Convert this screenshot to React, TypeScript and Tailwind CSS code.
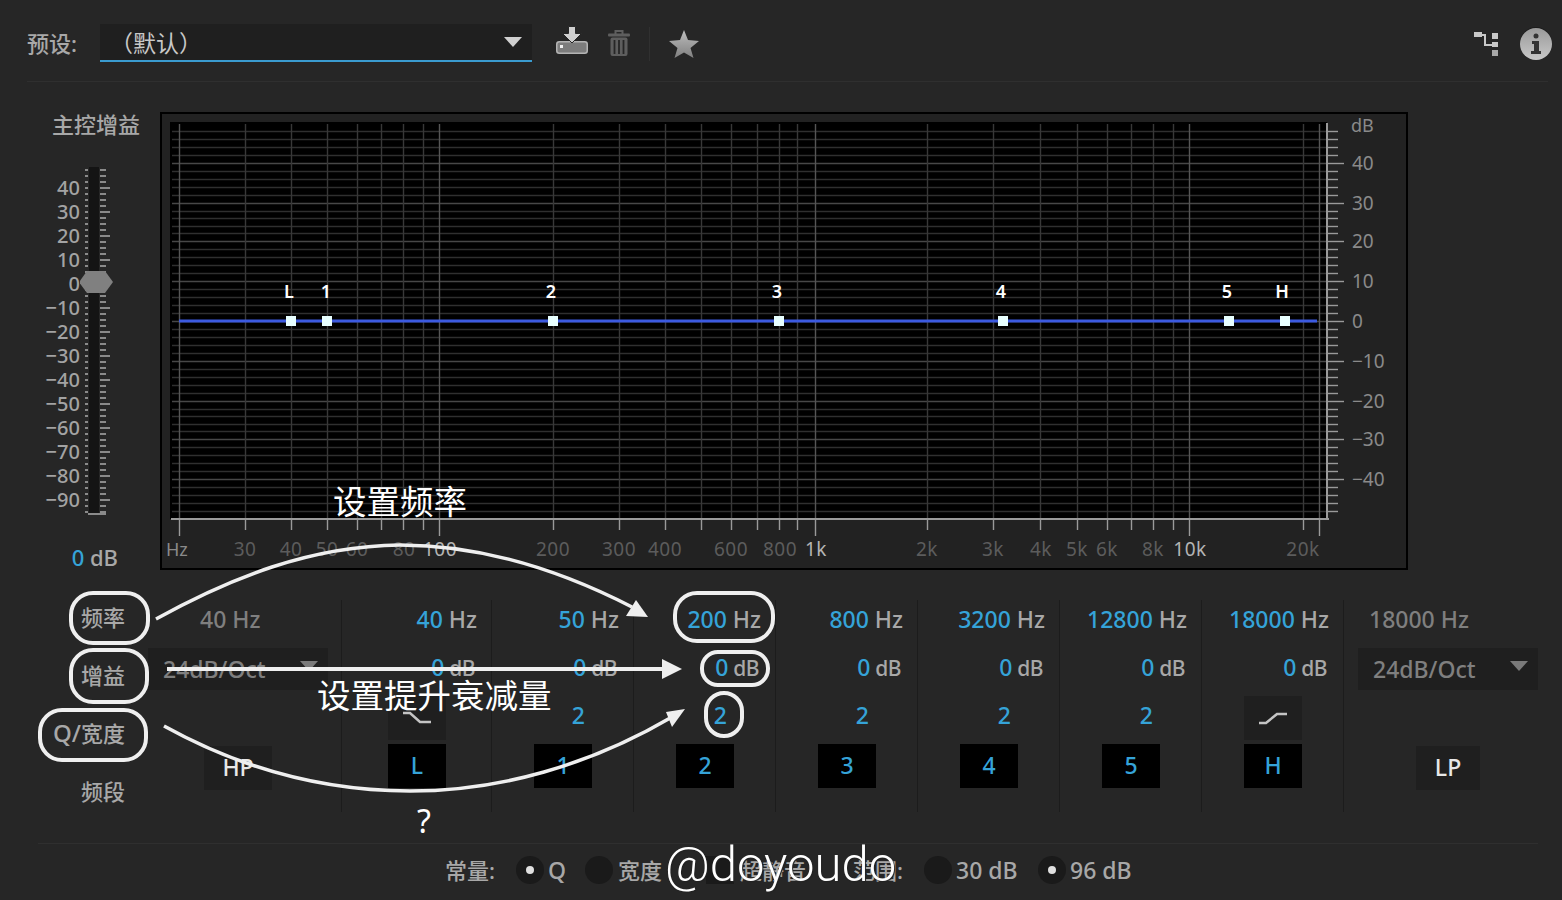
import React from 'react';

const sans = "font-['Noto_Sans','Noto_Sans_CJK_SC',sans-serif]";

const majorY = [123, 163, 203, 241, 281, 321, 361, 401, 439, 479, 519];
const freqTicks = [179, 245, 291, 327, 357, 381, 403, 423, 439, 553, 619, 665, 701, 731, 757, 779, 797, 815, 927, 993, 1040, 1077, 1107, 1131, 1153, 1173, 1189, 1303, 1319];
const freqLabels = [
  { t: '30', x: 245 }, { t: '40', x: 291 }, { t: '50', x: 327 }, { t: '60', x: 357 }, { t: '80', x: 404 },
  { t: '100', x: 440, hi: true }, { t: '200', x: 553 }, { t: '300', x: 619 }, { t: '400', x: 665 }, { t: '600', x: 731 },
  { t: '800', x: 780 }, { t: '1k', x: 816, hi: true }, { t: '2k', x: 927 }, { t: '3k', x: 993 }, { t: '4k', x: 1041 },
  { t: '5k', x: 1077 }, { t: '6k', x: 1107 }, { t: '8k', x: 1153 }, { t: '10k', x: 1190, hi: true }, { t: '20k', x: 1303 },
];
const dbLabels = [
  { t: '40', y: 163 }, { t: '30', y: 203 }, { t: '20', y: 241 }, { t: '10', y: 281 }, { t: '0', y: 321 },
  { t: '−10', y: 361 }, { t: '−20', y: 401 }, { t: '−30', y: 439 }, { t: '−40', y: 479 },
];
const nodes = [
  { t: 'L', x: 291, lx: 289 }, { t: '1', x: 327, lx: 326 }, { t: '2', x: 553, lx: 551 }, { t: '3', x: 779, lx: 777 },
  { t: '4', x: 1003, lx: 1001 }, { t: '5', x: 1229, lx: 1227 }, { t: 'H', x: 1285, lx: 1282 },
];
const masterLabels = ['40', '30', '20', '10', '0', '−10', '−20', '−30', '−40', '−50', '−60', '−70', '−80', '−90'];

const bands = [
  { id: 'L', freq: '40', width: 'w-[150px]', btn: 'mr-[45px]', q: 'low' },
  { id: '1', freq: '50', width: 'w-[142px]', btn: 'mr-[41px]', q: '2' },
  { id: '2', freq: '200', width: 'w-[142px]', btn: 'mr-[41px]', q: '2' },
  { id: '3', freq: '800', width: 'w-[142px]', btn: 'mr-[41px]', q: '2' },
  { id: '4', freq: '3200', width: 'w-[142px]', btn: 'mr-[41px]', q: '2' },
  { id: '5', freq: '12800', width: 'w-[142px]', btn: 'mr-[41px]', q: '2' },
  { id: 'H', freq: '18000', width: 'w-[142px]', btn: 'mr-[41px]', q: 'high' },
];

// every 5th line of the dB grid is brighter, the rest are subdivided between them
function minorY() {
  const out: number[] = [];
  for (let i = 0; i < majorY.length - 1; i++) {
    for (let k = 1; k < 5; k++) {
      const y = majorY[i] + ((majorY[i + 1] - majorY[i]) * k) / 5;
      out.push(Math.round(y));
    }
  }
  return out;
}

function EqGraph() {
  const minors = minorY();
  const inner = majorY.slice(1, -1);
  return (
    <svg width="1244" height="454" viewBox="162 114 1244 454" className="block">
      <rect x="170" y="122" width="1157" height="397" fill="#000" />
      {minors.map((y) => (
        <line key={y} x1="172" x2="1327" y1={y + 0.5} y2={y + 0.5} stroke="#2f2f2f" strokeWidth="1.4" />
      ))}
      {inner.map((y) => (
        <line key={y} x1="172" x2="1327" y1={y + 0.5} y2={y + 0.5} stroke="#474747" strokeWidth="1.4" />
      ))}
      {freqTicks.map((x) => {
        const long = x === 179 || x === 439 || x === 815 || x === 1189 || x === 1319;
        const end = x === 1319 || long ? 536 : 530;
        return (
          <g key={x}>
            <line x1={x + 0.5} x2={x + 0.5} y1="124" y2="519" stroke={long ? '#555' : '#383838'} strokeWidth="1.4" />
            <line x1={x + 0.5} x2={x + 0.5} y1="519" y2={end} stroke="#9a9a9a" strokeWidth="1.4" />
          </g>
        );
      })}
      <line x1="171" x2="1329" y1="519" y2="519" stroke="#9a9a9a" strokeWidth="2" />
      <line x1="1327" x2="1327" y1="123" y2="520" stroke="#9a9a9a" strokeWidth="2" />
      {minors.map((y) => (
        <line key={y} x1="1327" x2="1338" y1={y + 0.5} y2={y + 0.5} stroke="#9a9a9a" strokeWidth="1.4" />
      ))}
      {inner.map((y) => (
        <line key={y} x1="1327" x2="1344" y1={y + 0.5} y2={y + 0.5} stroke="#9a9a9a" strokeWidth="1.4" />
      ))}
      <line x1="179" x2="1317" y1="321" y2="321" stroke="#3c5ae0" strokeWidth="3" />
      {nodes.map((n) => (
        <g key={n.t}>
          <rect x={n.x - 5} y="316" width="10" height="10" fill="#e8ffff" />
          <text x={n.lx} y="298" textAnchor="middle" fontSize="18" fontWeight="600" fill="#fff">{n.t}</text>
        </g>
      ))}
      <text x="1351" y="132" fontSize="18" fill="#8a8a8a">dB</text>
      {dbLabels.map((d) => (
        <text key={d.t} x="1352" y={d.y + 7} fontSize="19" fill="#8a8a8a">{d.t}</text>
      ))}
      <text x="166" y="556" fontSize="18" fill="#8a8a8a">Hz</text>
      {freqLabels.map((l) => (
        <text key={l.t} x={l.x} y="556" textAnchor="middle" fontSize="19" letterSpacing="0.5" fill={l.hi ? '#b4b4b4' : '#5c5c5c'}>{l.t}</text>
      ))}
    </svg>
  );
}

function MasterFader() {
  const dots: number[] = [];
  for (let y = 171; y < 516; y += 6) dots.push(y);
  return (
    <div className="relative h-[348px] w-[160px]">
      <div className="flex w-[80px] flex-col items-end pt-[9px]">
        {masterLabels.map((l) => (
          <div key={l} className="flex h-[24px] items-center text-[20px] font-medium leading-none text-[#a3a3a3]">{l}</div>
        ))}
      </div>
      <svg width="40" height="348" viewBox="80 168 40 348" className="absolute left-[80px] top-0">
        <rect x="89" y="168" width="10" height="348" fill="#141414" />
        {dots.map((y) => (
          <g key={y}>
            <line x1="85" x2="88" y1={y} y2={y} stroke="#8a8a8a" strokeWidth="2" />
            <line x1="100" x2="106" y1={y} y2={y} stroke="#8a8a8a" strokeWidth="2" />
          </g>
        ))}
        {masterLabels.map((l, i) => (
          <line key={l} x1="100" x2="110" y1={189 + i * 24} y2={189 + i * 24} stroke="#8a8a8a" strokeWidth="2" />
        ))}
        <line x1="88" x2="106" y1="515" y2="515" stroke="#8a8a8a" strokeWidth="2" />
        <polygon points="79,283 87,272 105,272 113,283 105,294 87,294" fill="#808080" />
      </svg>
    </div>
  );
}

function HzValue({ n }: { n: string }) {
  return (
    <span className="whitespace-nowrap text-[23px] font-medium leading-none">
      <span className="text-[#35a3d8]">{n}</span>
      <span className="text-[#a8a8a8]"> Hz</span>
    </span>
  );
}

function DbValue() {
  return (
    <span className="whitespace-nowrap text-[23px] font-medium leading-none">
      <span className="text-[#35a3d8]">0</span>
      <span className="text-[21px] tracking-tight text-[#a8a8a8]"> dB</span>
    </span>
  );
}

function CurveIcon({ high }: { high?: boolean }) {
  return (
    <svg width="30" height="14" viewBox="0 0 30 14">
      {high ? (
        <path d="M1 12 H8 L19 3 H29" fill="none" stroke="#c4c4c4" strokeWidth="2.5" />
      ) : (
        <path d="M1 2 H8 L18 11 H29" fill="none" stroke="#c4c4c4" strokeWidth="2.5" />
      )}
    </svg>
  );
}

function BandColumn({ band }: { band: (typeof bands)[number] }) {
  return (
    <div className={`${band.width} flex flex-col items-end border-l border-[#1c1c1c]`}>
      <div className="mb-[2px] flex h-[38px] items-center pr-[14px]">
        <HzValue n={band.freq} />
      </div>
      <div className="mb-[2px] flex h-[54px] items-center pr-[16px]">
        <DbValue />
      </div>
      {band.q === '2' ? (
        <div className="flex h-[44px] items-start pr-[48px] pt-[8px] text-[23px] font-medium leading-none text-[#35a3d8]">2</div>
      ) : (
        <div className={`flex h-[44px] w-[58px] items-center justify-center bg-[#1f1f1f] ${band.btn}`}>
          <CurveIcon high={band.q === 'high'} />
        </div>
      )}
      <div className={`mt-[4px] flex h-[44px] w-[58px] items-center justify-center bg-black pb-[2px] text-[23px] font-medium text-[#35a3d8] ${band.btn}`}>
        {band.id}
      </div>
    </div>
  );
}

function SlopeSelect({ className }: { className: string }) {
  return (
    <div className={`flex h-[42px] w-[180px] items-center justify-between bg-[#1f1f1f] pl-[15px] pr-[10px] text-[23px] font-medium text-[#7f7f7f] ${className}`}>
      <span className="leading-none">24dB/Oct</span>
      <svg width="18" height="10" viewBox="0 0 18 10" className="-mt-[6px]">
        <polygon points="0,0 18,0 9,10" fill="#7a7a7a" />
      </svg>
    </div>
  );
}

function Radio({ on }: { on?: boolean }) {
  return (
    <span className="flex h-[28px] w-[28px] items-center justify-center rounded-full bg-[#1a1a1a]">
      {on && <span className="h-[8px] w-[8px] rounded-full bg-[#e0e0e0]" />}
    </span>
  );
}

function Annotations() {
  return (
    <div className="pointer-events-none absolute inset-0">
      <svg width="1562" height="900" viewBox="0 0 1562 900" className="absolute left-0 top-0">
        <g fill="none" stroke="#efefef" strokeWidth="4">
          <rect x="71" y="593" width="77" height="50" rx="22" />
          <rect x="71" y="650" width="76" height="52" rx="22" />
          <rect x="40" y="710" width="106" height="50" rx="22" />
          <rect x="675" y="593" width="98" height="48" rx="22" />
          <rect x="702" y="652" width="66" height="33" rx="16" />
          <rect x="706" y="693" width="36" height="43" rx="18" />
          <path d="M156 619 C 230 578, 310 546, 400 545 C 480 545, 560 570, 632 607" strokeWidth="3.5" />
          <path d="M167 669 H664" strokeWidth="4" />
          <path d="M164 726 C 240 768, 320 791, 410 791 C 500 791, 590 765, 672 717" strokeWidth="3.5" />
        </g>
        <g fill="#efefef">
          <polygon points="648,617 636,600 626,616" />
          <polygon points="662,659 682,669 662,679" />
          <polygon points="685,709 666,712 672,727" />
        </g>
      </svg>
      <div className="absolute left-[333px] top-[480px] text-[33.5px] leading-[42px] text-white">设置频率</div>
      <div className="absolute left-[317px] top-[674px] text-[33.5px] leading-[42px] text-white">设置提升衰减量</div>
      <div className="absolute left-[417px] top-[800px] text-[32px] leading-[42px] text-white">?</div>
      <div className="absolute left-[665px] top-[837px] font-['Roboto',sans-serif] text-[49px] font-light leading-[56px] text-white [text-shadow:1px_1px_1px_#222]">
        @doyoudo
      </div>
    </div>
  );
}

export default function App() {
  return (
    <div className={`relative h-[900px] w-[1562px] overflow-hidden bg-[#262626] ${sans}`}>
      {/* Preset bar */}
      <div className="ml-[27px] mr-[14px] flex h-[82px] items-start border-b border-[#2f2f2f] pt-[24px]">
        <span className="flex h-[38px] w-[73px] items-center text-[22px] font-medium leading-none text-[#a8a8a8]">预设:</span>
        <div className="flex h-[38px] w-[432px] items-center justify-between border-b-2 border-[#3a9bcf] bg-[#1f1f1f] pl-[10px] pr-[10px]">
          <span className="mt-[3px] text-[23px] leading-none text-[#c8c8c8]">（默认）</span>
          <svg width="18" height="10" viewBox="0 0 18 10">
            <polygon points="0,0 18,0 9,10" fill="#d0d0d0" />
          </svg>
        </div>
        <svg width="32" height="28" viewBox="0 0 32 28" className="ml-[24px] mt-[2px]">
          <rect x="0.750" y="15.750" width="30.500" height="11.500" rx="2.500" fill="#7c7c7c" stroke="#b4b4b4" strokeWidth="1.500" />
          <rect x="4" y="19" width="3" height="3" fill="#f0f0f0" />
          <path d="M12.500 0.500 H19.500 V7.500 H25.500 L16 17 L6.500 7.500 H12.500 Z" fill="#cfcfcf" stroke="#262626" strokeWidth="1" />
        </svg>
        <svg width="22" height="26" viewBox="0 0 22 26" className="ml-[20px] mt-[6px]">
          <path d="M7.500 4 V1 H14.500 V4" fill="none" stroke="#5e5e5e" strokeWidth="2" />
          <rect x="0" y="3.500" width="22" height="3" rx="1" fill="#5e5e5e" />
          <rect x="2.500" y="7.500" width="17" height="18.500" rx="2" fill="#5e5e5e" />
          <path d="M6.500 10 V24 M11 10 V24 M15.500 10 V24" stroke="#262626" strokeWidth="1.800" />
        </svg>
        <div className="ml-[19px] mt-[3px] h-[34px] w-px bg-[#303030]" />
        <svg width="30" height="28" viewBox="0 0 30 28" className="ml-[19px] mt-[6px]">
          <defs>
            <linearGradient id="star" x1="0" y1="0" x2="0" y2="1">
              <stop offset="0" stopColor="#bdbdbd" />
              <stop offset="1" stopColor="#808080" />
            </linearGradient>
          </defs>
          <polygon points="15,0 19,10 30,11 21.500,18 24.500,28 15,22.500 5.500,28 8.500,18 0,11 11,10" fill="url(#star)" />
        </svg>
        <svg width="24" height="24" viewBox="0 0 24 24" className="ml-auto mt-[8px]">
          <rect x="0" y="0" width="8" height="5" fill="#c8c8c8" />
          <path d="M8 3 H11 V13 H18" fill="none" stroke="#c8c8c8" strokeWidth="2" />
          <rect x="18" y="1" width="6" height="6" fill="#c8c8c8" />
          <rect x="18" y="10" width="6" height="5" fill="#c8c8c8" />
          <rect x="18" y="18" width="6" height="6" fill="#a8a8a8" />
        </svg>
        <svg width="32" height="34" viewBox="0 0 32 34" className="ml-[22px] mr-[-4px] mt-[3px]">
          <defs>
            <linearGradient id="info" x1="0" y1="0" x2="0" y2="1">
              <stop offset="0" stopColor="#9a9a9a" />
              <stop offset="1" stopColor="#c8c8c8" />
            </linearGradient>
          </defs>
          <circle cx="16" cy="16" r="16" fill="#1c1c1c" />
          <circle cx="16" cy="17" r="16" fill="url(#info)" />
          <circle cx="16" cy="9" r="2.500" fill="#333" />
          <path d="M12 14 H19 V24 H21 V27 H11 V24 H14 V17 H12 Z" fill="#333" />
        </svg>
      </div>

      {/* Master gain + graph */}
      <div className="mt-[30px] flex h-[458px]">
        <div className="flex w-[160px] flex-col">
          <div className="flex h-[28px] items-center justify-end pr-[20px] text-[22px] font-medium leading-none text-[#a8a8a8]">主控增益</div>
          <div className="mt-[28px]">
            <div className="pt-[3px]">
              <MasterFader />
            </div>
          </div>
          <div className="mt-[29px] flex h-[30px] items-center justify-end pr-[42px]">
            <span className="whitespace-nowrap text-[22px] font-medium leading-none">
              <span className="text-[#35a3d8]">0</span>
              <span className="text-[#a8a8a8]"> dB</span>
            </span>
          </div>
        </div>
        <div className="h-[458px] w-[1248px] border-2 border-black bg-[#222222]">
          <EqGraph />
        </div>
      </div>

      {/* Band controls */}
      <div className="mt-[30px] flex h-[212px]">
        <div className="-mt-[12px] flex w-[148px] flex-col items-end pr-[23px] text-[22px] font-medium text-[#a8a8a8]">
          <div className="flex h-[58px] shrink-0 items-center leading-none">频率</div>
          <div className="flex h-[58px] shrink-0 items-center leading-none">增益</div>
          <div className="flex h-[58px] shrink-0 items-center leading-none">
            <span className="text-[24px]">Q/</span>宽度
          </div>
          <div className="flex h-[58px] shrink-0 items-center leading-none">频段</div>
        </div>
        <div className="flex w-[193px] flex-col">
          <div className="flex h-[38px] items-center pl-[52px] text-[23px] font-medium leading-none text-[#7f7f7f]">40 Hz</div>
          <SlopeSelect className="mt-[10px]" />
          <div className="ml-[56px] mt-[56px] flex h-[44px] w-[68px] items-center justify-center bg-[#1f1f1f] pb-[2px] text-[23px] font-medium text-[#e8e8e8]">HP</div>
        </div>
        {bands.map((b) => (
          <BandColumn key={b.id} band={b} />
        ))}
        <div className="flex w-[195px] flex-col border-l border-[#1c1c1c]">
          <div className="flex h-[38px] items-center pl-[25px] text-[23px] font-medium leading-none text-[#7f7f7f]">18000 Hz</div>
          <SlopeSelect className="ml-[14px] mt-[10px]" />
          <div className="ml-[72px] mt-[56px] flex h-[44px] w-[64px] items-center justify-center bg-[#1f1f1f] pb-[2px] text-[23px] font-medium text-[#e8e8e8]">LP</div>
        </div>
      </div>

      {/* Footer options */}
      <div className="mx-[38px] mt-[31px] flex h-[53px] w-[1500px] items-center border-t border-[#2f2f2f] pl-[407px] text-[22px] font-medium leading-none text-[#a8a8a8]">
        <span className="w-[71px]">常量:</span>
        <Radio on />
        <span className="ml-[4px] w-[37px] text-[23px]">Q</span>
        <Radio />
        <span className="ml-[5px] w-[88px]">宽度</span>
        <span className="h-[28px] w-[28px] bg-[#1a1a1a]" />
        <span className="ml-[6px] w-[113px]">超静音</span>
        <span className="w-[71px]">范围:</span>
        <Radio />
        <span className="ml-[4px] w-[82px] text-[23px]">30 dB</span>
        <Radio on />
        <span className="ml-[4px] text-[23px]">96 dB</span>
      </div>

      <Annotations />
    </div>
  );
}
